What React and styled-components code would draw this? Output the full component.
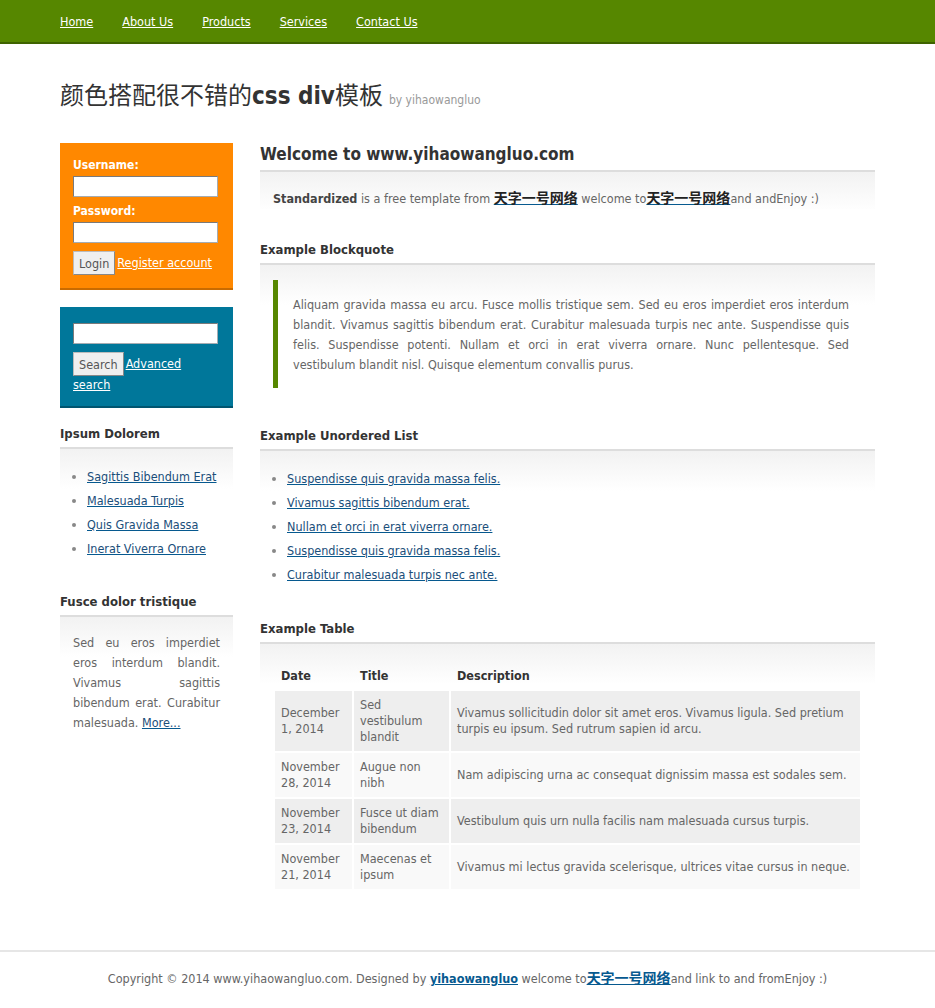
import React from "react";
import styled, { createGlobalStyle } from "styled-components";

const FONT = `Tahoma, "DejaVu Sans", "Noto Sans CJK SC", sans-serif`;

const GlobalStyle = createGlobalStyle`
  body {
    margin: 0;
    background: #fff;
    font-family: ${FONT};
    font-stretch: condensed;
    font-size: 12.5px;
    color: #666;
  }
  * { box-sizing: border-box; }
`;

const Nav = styled.div`
  background: #568700;
  border-bottom: 2px solid #3e6300;
  height: 44px;
`;

const NavInner = styled.ul`
  width: 815px;
  margin: 0 auto;
  padding: 0;
  list-style: none;
  display: flex;
  gap: 29px;
  height: 42px;
  align-items: center;
`;

const NavLink = styled.a`
  color: #fff;
  text-decoration: underline;
`;

const Wrap = styled.div`
  width: 815px;
  margin: 0 auto;
  padding-bottom: 59px;
`;

const Header = styled.div`
  padding: 36px 0 27px;
  line-height: 32px;
`;

const SiteTitle = styled.h1`
  margin: 0;
  font-size: 24px;
  font-weight: normal;
  color: #333;
  b { font-weight: bold; }
`;

const Byline = styled.span`
  font-size: 12px;
  color: #999;
  margin-left: 6px;
`;

const Columns = styled.div`
  display: flex;
  gap: 27px;
  align-items: flex-start;
`;

const Sidebar = styled.div`
  width: 173px;
  flex: none;
`;

const Main = styled.div`
  width: 615px;
`;

const ColorBox = styled.div`
  background: ${(p) => p.bg};
  border-bottom: 2px solid ${(p) => p.edge};
  padding: ${(p) => p.pad || "15px 13px 13px"};
  margin-bottom: 17px;
  color: #fff;
`;

const Label = styled.label`
  display: block;
  font-weight: bold;
  font-size: 12px;
  line-height: 15px;
  margin-bottom: 3px;
`;

const Field = styled.input`
  display: block;
  width: 145px;
  height: 21px;
  border: 1px solid #a5acb2;
  border-top-color: #7a7a7a;
  border-left-color: #7a7a7a;
  background: #fff;
  margin-bottom: ${(p) => p.gap || 7}px;
  padding: 0 2px;
`;

const Button = styled.button`
  font-family: ${FONT};
  font-stretch: condensed;
  font-size: 12.5px;
  color: #555;
  background: #efefef;
  border: 1px solid #bbb;
  border-bottom-color: #888;
  border-right-color: #888;
  height: 24px;
  padding: 0 5px;
  vertical-align: middle;
  margin-right: 2px;
`;

const WhiteLink = styled.a`
  color: #fff;
  text-decoration: underline;
`;

const Inline = styled.div`
  line-height: 18px;
`;

const SideHead = styled.h3`
  margin: ${(p) => p.top || 15}px 0 0;
  font-size: 13px;
  line-height: 18px;
  color: #333;
  padding-bottom: 4px;
  border-bottom: 2px solid #ddd;
`;

const GradBox = styled.div`
  background: linear-gradient(#f2f2f2, #fff 40px);
  padding: ${(p) => p.pad || "15px 13px 13px"};
`;

const LinkList = styled.ul`
  margin: 0;
  padding: 0 0 0 27px;
  line-height: 24px;
  li::marker { color: #888; }
`;

const BlueLink = styled.a`
  color: #1a4e7a;
  text-decoration: underline;
  text-decoration-color: #06598f;
`;

const Cjk = styled.span`
  font-size: 14px;
  line-height: 1;
`;

const Justified = styled.p`
  margin: 0;
  line-height: 20px;
  text-align: justify;
`;

const Title = styled.h2`
  margin: 0;
  font-size: 17px;
  line-height: 22px;
  color: #333;
  padding-bottom: 5px;
  border-bottom: 2px solid #ddd;
`;

const SectionHead = styled.h3`
  margin: ${(p) => p.top || 32}px 0 0;
  font-size: 13px;
  line-height: 18px;
  color: #333;
  padding-bottom: 4px;
  border-bottom: 2px solid #ddd;
`;

const Intro = styled.p`
  margin: 0;
  line-height: 20px;
  strong { color: #444; }
  a { color: #222; font-weight: bold; text-decoration-color: #06598f; }
`;

const Quote = styled.blockquote`
  margin: 0;
  border-left: 5px solid #568700;
  padding: 15px 13px 13px 15px;
  line-height: 20px;
  text-align: justify;
`;

const Table = styled.table`
  width: 100%;
  border-spacing: 2px;
  margin-top: -2px;
  line-height: 16px;
`;

const Th = styled.th`
  text-align: left;
  color: #333;
  padding: 6px 6px 5px;
`;

const Td = styled.td`
  padding: 6px;
  background: ${(p) => (p.$alt ? "#f9f9f9" : "#eeeeee")};
  vertical-align: middle;
`;

const Footer = styled.div`
  border-top: 2px solid #e6e6e6;
  text-align: center;
  padding: 17px 0 30px;
  line-height: 20px;
  a { color: #06598f; font-weight: bold; }
`;

const navItems = ["Home", "About Us", "Products", "Services", "Contact Us"];
const sideLinks = ["Sagittis Bibendum Erat", "Malesuada Turpis", "Quis Gravida Massa", "Inerat Viverra Ornare"];
const listLinks = [
  "Suspendisse quis gravida massa felis.",
  "Vivamus sagittis bibendum erat.",
  "Nullam et orci in erat viverra ornare.",
  "Suspendisse quis gravida massa felis.",
  "Curabitur malesuada turpis nec ante.",
];
const rows = [
  ["December 1, 2014", "Sed vestibulum blandit", "Vivamus sollicitudin dolor sit amet eros. Vivamus ligula. Sed pretium turpis eu ipsum. Sed rutrum sapien id arcu."],
  ["November 28, 2014", "Augue non nibh", "Nam adipiscing urna ac consequat dignissim massa est sodales sem."],
  ["November 23, 2014", "Fusce ut diam bibendum", "Vestibulum quis urn nulla facilis nam malesuada cursus turpis."],
  ["November 21, 2014", "Maecenas et ipsum", "Vivamus mi lectus gravida scelerisque, ultrices vitae cursus in neque."],
];

export default function App() {
  return (
    <>
      <GlobalStyle />
      <Nav>
        <NavInner>
          {navItems.map((n) => (
            <li key={n}>
              <NavLink href="#">{n}</NavLink>
            </li>
          ))}
        </NavInner>
      </Nav>
      <Wrap>
        <Header>
          <SiteTitle>
            颜色搭配很不错的<b>css div</b>模板<Byline>by yihaowangluo</Byline>
          </SiteTitle>
        </Header>
        <Columns>
          <Sidebar>
            <ColorBox bg="#ff8800" edge="#c96b00" pad="15px 13px 13px">
              <Label>Username:</Label>
              <Field />
              <Label>Password:</Label>
              <Field gap={8} />
              <Inline>
                <Button>Login</Button>
                <WhiteLink href="#">Register account</WhiteLink>
              </Inline>
            </ColorBox>
            <ColorBox bg="#00779a" edge="#005570" pad="16px 13px 12px">
              <Field gap={8} />
              <Inline>
                <Button>Search</Button>
                <WhiteLink href="#">Advanced search</WhiteLink>
              </Inline>
            </ColorBox>
            <SideHead>Ipsum Dolorem</SideHead>
            <GradBox pad="16px 0 13px">
              <LinkList>
                {sideLinks.map((l) => (
                  <li key={l}>
                    <BlueLink href="#">{l}</BlueLink>
                  </li>
                ))}
              </LinkList>
            </GradBox>
            <SideHead top={19}>Fusce dolor tristique</SideHead>
            <GradBox pad="16px 13px 13px">
              <Justified>
                Sed eu eros imperdiet eros interdum blandit. Vivamus sagittis bibendum erat. Curabitur
                malesuada. <BlueLink href="#">More...</BlueLink>
              </Justified>
            </GradBox>
          </Sidebar>
          <Main>
            <Title>Welcome to www.yihaowangluo.com</Title>
            <GradBox pad="17px 13px 0">
              <Intro>
                <strong>Standardized</strong> is a free template from{" "}
                <a href="#"><Cjk>天字一号网络</Cjk></a> welcome to
                <a href="#"><Cjk>天字一号网络</Cjk></a>and andEnjoy :)
              </Intro>
            </GradBox>
            <SectionHead>Example Blockquote</SectionHead>
            <GradBox pad="15px 13px 0">
              <Quote>
                Aliquam gravida massa eu arcu. Fusce mollis tristique sem. Sed eu eros imperdiet eros interdum
                blandit. Vivamus sagittis bibendum erat. Curabitur malesuada turpis nec ante. Suspendisse quis
                felis. Suspendisse potenti. Nullam et orci in erat viverra ornare. Nunc pellentesque. Sed
                vestibulum blandit nisl. Quisque elementum convallis purus.
              </Quote>
            </GradBox>
            <SectionHead top={39}>Example Unordered List</SectionHead>
            <GradBox pad="16px 0 0">
              <LinkList>
                {listLinks.map((l, i) => (
                  <li key={i}>
                    <BlueLink href="#">{l}</BlueLink>
                  </li>
                ))}
              </LinkList>
            </GradBox>
            <SectionHead top={33}>Example Table</SectionHead>
            <GradBox pad="18px 13px 0">
              <Table>
                <thead>
                  <tr>
                    <Th style={{ width: 77 }}>Date</Th>
                    <Th style={{ width: 95 }}>Title</Th>
                    <Th>Description</Th>
                  </tr>
                </thead>
                <tbody>
                  {rows.map((r, i) => (
                    <tr key={i}>
                      {r.map((c, j) => (
                        <Td key={j} $alt={i % 2 === 1}>
                          {c}
                        </Td>
                      ))}
                    </tr>
                  ))}
                </tbody>
              </Table>
            </GradBox>
          </Main>
        </Columns>
      </Wrap>
      <Footer>
        Copyright © 2014 www.yihaowangluo.com. Designed by <a href="#">yihaowangluo</a> welcome to
        <a href="#"><Cjk>天字一号网络</Cjk></a>and link to and fromEnjoy :)
      </Footer>
    </>
  );
}
